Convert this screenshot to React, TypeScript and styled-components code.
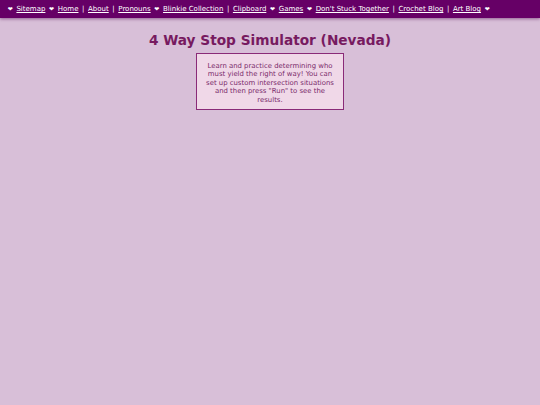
import React from "react";
import styled, { createGlobalStyle } from "styled-components";

const Global = createGlobalStyle`
  html, body { margin: 0; padding: 0; background: #d8bfd8; }
  body { font-family: "DejaVu Sans", Verdana, sans-serif; min-height: 405px; }
`;

const Nav = styled.nav`
  background: #660066;
  height: 18px;
  display: flex;
  align-items: center;
  padding-left: 4px;
  box-shadow: 0 1px 3px rgba(80, 0, 80, 0.5);
  font-size: 7px;
  color: #ffffff;
  white-space: nowrap;
`;

const Sep = styled.span<{ $heart?: boolean }>`
  display: inline-flex;
  align-items: center;
  height: 9px;
  margin: 0 ${(p) => (p.$heart ? 3.7 : 3.6)}px;
  font-size: ${(p) => (p.$heart ? 6 : 7)}px;
  line-height: 1;
  position: relative;
  top: ${(p) => (p.$heart ? -0.5 : 0)}px;
`;

const NavLink = styled.a`
  color: #ffffff;
  text-decoration: underline;
`;

const Main = styled.main`
  display: flex;
  flex-direction: column;
  align-items: center;
  padding-top: 14px;
`;

const Title = styled.h1`
  margin: 0;
  font-size: 13.7px;
  font-weight: bold;
  color: #771a60;
`;

const InfoBox = styled.div`
  margin-top: 5px;
  width: 134px;
  padding: 8px 6px 5px 6px;
  background: #f0d8e8;
  border: 1.5px solid #8a2a78;
  color: #7a2a6a;
  font-size: 6.9px;
  line-height: 8.4px;
  text-align: center;
`;

type Item = { label: string; sep: "heart" | "bar" };
const items: Item[] = [
  { label: "Sitemap", sep: "heart" },
  { label: "Home", sep: "heart" },
  { label: "About", sep: "bar" },
  { label: "Pronouns", sep: "bar" },
  { label: "Blinkie Collection", sep: "heart" },
  { label: "Clipboard", sep: "bar" },
  { label: "Games", sep: "heart" },
  { label: "Don't Stuck Together", sep: "heart" },
  { label: "Crochet Blog", sep: "bar" },
  { label: "Art Blog", sep: "bar" },
];

export default function App() {
  return (
    <>
      <Global />
      <Nav>
        {items.map((it) => (
          <React.Fragment key={it.label}>
            <Sep $heart={it.sep === "heart"}>{it.sep === "heart" ? "❤" : "|"}</Sep>
            <NavLink href="#">{it.label}</NavLink>
          </React.Fragment>
        ))}
        <Sep $heart>❤</Sep>
      </Nav>
      <Main>
        <Title>4 Way Stop Simulator (Nevada)</Title>
        <InfoBox>
          Learn and practice determining who must yield the right of way! You can set up custom intersection situations and then press "Run" to see the results.
        </InfoBox>
      </Main>
    </>
  );
}
